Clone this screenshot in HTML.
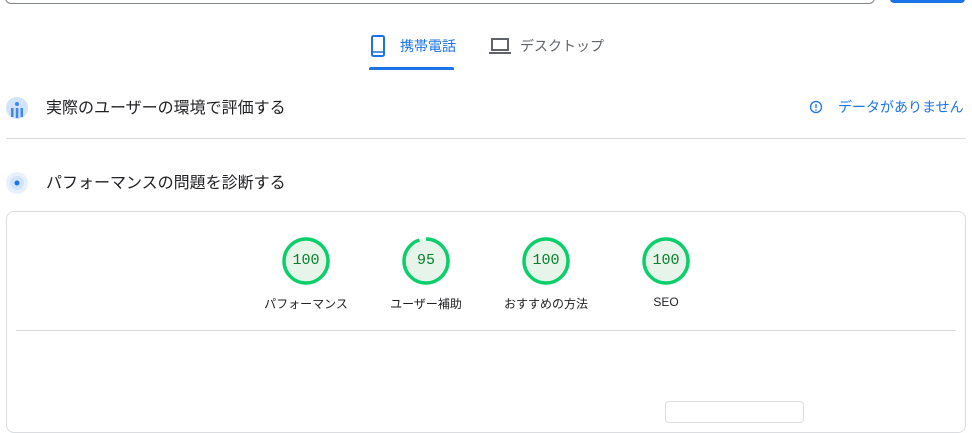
<!DOCTYPE html>
<html><head><meta charset="utf-8"><style>
body{margin:0;width:972px;height:406px;overflow:hidden;background:#fff;font-family:"Liberation Sans","Noto Sans CJK JP",sans-serif;position:relative;color:#202124}
.a{position:absolute}
.g{position:absolute;top:236px;width:50px;height:50px}
.g span{position:absolute;left:0;top:0;width:50px;line-height:50px;text-align:center;font-family:"Liberation Mono",monospace;font-size:15px;color:#08802b}
.l{position:absolute;top:295px;width:120px;text-align:center;font-size:12px;color:#202124}
</style></head><body>
<div class="a" style="left:5px;top:-10px;width:868px;height:12px;border:1px solid #80868b;border-radius:6px"></div>
<div class="a" style="left:890px;top:-10px;width:75px;height:13px;background:#1a73e8;border-radius:4px"></div>

<svg class="a" style="left:368px;top:34px" width="20" height="24" viewBox="0 0 20 24"><rect x="4" y="2" width="12" height="20" rx="1.5" fill="none" stroke="#1a73e8" stroke-width="2"/><line x1="4" y1="18" x2="16" y2="18" stroke="#1a73e8" stroke-width="1.5"/></svg>
<div class="a" style="left:400px;top:36px;font-size:14px;color:#1a73e8">携帯電話</div>
<div class="a" style="left:369px;top:67px;width:85px;height:3px;background:#1a73e8;border-radius:2px 2px 0 0"></div>
<svg class="a" style="left:488px;top:36px" width="24" height="20" viewBox="0 0 24 20"><rect x="4" y="3" width="16" height="11" fill="none" stroke="#5f6368" stroke-width="2"/><line x1="1" y1="17" x2="23" y2="17" stroke="#5f6368" stroke-width="2"/></svg>
<div class="a" style="left:520px;top:36px;font-size:14px;color:#5f6368">デスクトップ</div>

<svg class="a" style="left:5px;top:95px" width="24" height="26" viewBox="0 0 24 26"><circle cx="12" cy="13" r="11" fill="#d2e3fc"/><circle cx="12" cy="9" r="2" fill="#4285f4"/><rect x="6" y="13" width="2.5" height="9" fill="#4285f4"/><rect x="10.8" y="13" width="2.5" height="10" fill="#4285f4"/><rect x="15.5" y="13" width="2.5" height="9" fill="#4285f4"/></svg>
<div class="a" style="left:46px;top:94px;font-size:16px">実際のユーザーの環境で評価する</div>
<svg class="a" style="left:809px;top:100px" width="14" height="14" viewBox="0 0 14 14"><circle cx="7" cy="7" r="5.5" fill="none" stroke="#1a73e8" stroke-width="1.3"/><line x1="7" y1="4" x2="7" y2="8" stroke="#1a73e8" stroke-width="1.3"/><circle cx="7" cy="10" r=".8" fill="#1a73e8"/></svg>
<div class="a" style="left:838px;top:97px;font-size:14px;color:#1a73e8">データがありません</div>
<div class="a" style="left:6px;top:138px;width:960px;height:1px;background:#dadce0"></div>

<svg class="a" style="left:5px;top:170px" width="24" height="26" viewBox="0 0 24 26"><circle cx="12" cy="13" r="11" fill="#e8f0fe"/><circle cx="12" cy="13" r="7" fill="#d2e3fc"/><circle cx="12" cy="13" r="2.5" fill="#1a73e8"/></svg>
<div class="a" style="left:46px;top:169px;font-size:16px">パフォーマンスの問題を診断する</div>

<div class="a" style="left:6px;top:211px;width:958px;height:220px;border:1px solid #dadce0;border-radius:8px"></div>
<div class="a" style="left:16px;top:330px;width:940px;height:1px;background:#dadce0"></div>
<div class="a" style="left:665px;top:401px;width:137px;height:20px;border:1px solid #dadce0;border-radius:4px"></div>

<div class="g" style="left:281px"><svg width="50" height="50"><circle cx="25" cy="25" r="22" fill="#e6f4ea" stroke="#0cce6b" stroke-width="3.5"/></svg><span>100</span></div>
<div class="g" style="left:401px"><svg width="50" height="50"><circle cx="25" cy="25" r="22" fill="#e6f4ea" stroke="#0cce6b" stroke-width="3.5" stroke-dasharray="131.3 7" transform="rotate(-90 25 25)"/></svg><span>95</span></div>
<div class="g" style="left:521px"><svg width="50" height="50"><circle cx="25" cy="25" r="22" fill="#e6f4ea" stroke="#0cce6b" stroke-width="3.5"/></svg><span>100</span></div>
<div class="g" style="left:641px"><svg width="50" height="50"><circle cx="25" cy="25" r="22" fill="#e6f4ea" stroke="#0cce6b" stroke-width="3.5"/></svg><span>100</span></div>
<div class="l" style="left:246px">パフォーマンス</div>
<div class="l" style="left:366px">ユーザー補助</div>
<div class="l" style="left:486px">おすすめの方法</div>
<div class="l" style="left:606px">SEO</div>
</body></html>
